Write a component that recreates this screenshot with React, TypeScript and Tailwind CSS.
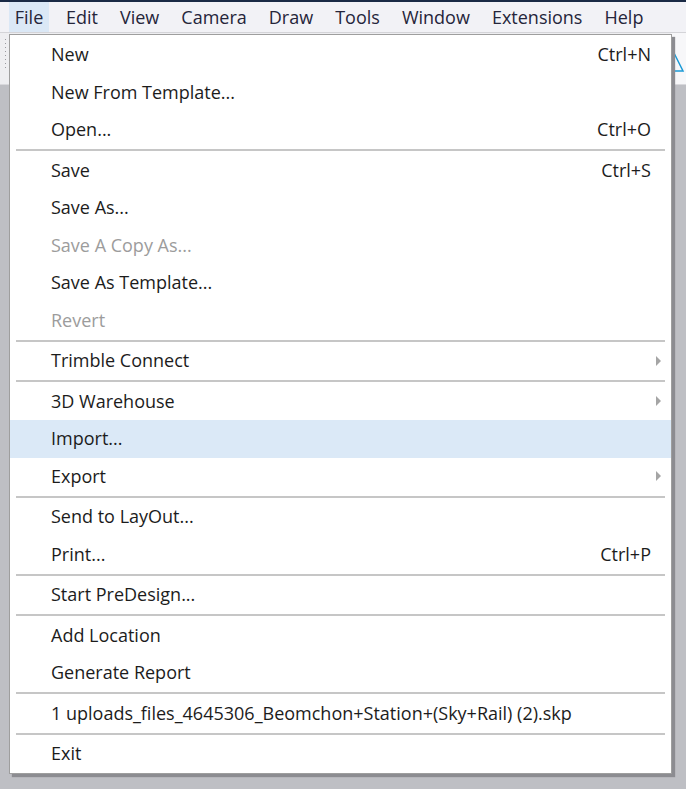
import React from 'react'

type Item = {
  label?: string
  shortcut?: string
  disabled?: boolean
  submenu?: boolean
  active?: boolean
  sep?: boolean
}

const items: Item[] = [
  { label: 'New', shortcut: 'Ctrl+N' },
  { label: 'New From Template...' },
  { label: 'Open...', shortcut: 'Ctrl+O' },
  { sep: true },
  { label: 'Save', shortcut: 'Ctrl+S' },
  { label: 'Save As...' },
  { label: 'Save A Copy As...', disabled: true },
  { label: 'Save As Template...' },
  { label: 'Revert', disabled: true },
  { sep: true },
  { label: 'Trimble Connect', submenu: true },
  { sep: true },
  { label: '3D Warehouse', submenu: true },
  { label: 'Import...', active: true },
  { label: 'Export', submenu: true },
  { sep: true },
  { label: 'Send to LayOut...' },
  { label: 'Print...', shortcut: 'Ctrl+P' },
  { sep: true },
  { label: 'Start PreDesign...' },
  { sep: true },
  { label: 'Add Location' },
  { label: 'Generate Report' },
  { sep: true },
  { label: '1 uploads_files_4645306_Beomchon+Station+(Sky+Rail) (2).skp' },
  { sep: true },
  { label: 'Exit' },
]

const menus = ['Edit', 'View', 'Camera', 'Draw', 'Tools', 'Window', 'Extensions', 'Help']

const Arrow = () => (
  <svg width="5" height="10" viewBox="0 0 5 10" className="absolute right-[10px]">
    <path d="M0 0 L5 5 L0 10 Z" fill="#a5a5a5" />
  </svg>
)

const MenuRow = ({ item }: { item: Item }) => {
  if (item.sep) {
    return (
      <div className="h-[3px] flex items-center px-[6px]">
        <div className="h-[2px] w-full bg-[#c6c6c6]" />
      </div>
    )
  }
  return (
    <div
      className={`relative h-[37.5px] flex items-center pl-[41px] pr-[20px] ${
        item.active ? 'bg-[#dbe9f7]' : ''
      } ${item.disabled ? 'text-[#9c9c9c]' : 'text-[#1c1c1c]'}`}
    >
      <span className="flex-1 whitespace-nowrap">{item.label}</span>
      {item.shortcut && <span>{item.shortcut}</span>}
      {item.submenu && <Arrow />}
    </div>
  )
}

const App = () => {
  return (
    <div
      className="relative w-[686px] h-[789px] overflow-hidden bg-[#bebfc4] text-[18px]"
      style={{ fontFamily: '"Open Sans", "Noto Sans", sans-serif' }}
    >
      <div className="h-[2px] bg-[#1a2a45]" />
      <div className="h-[31px] bg-[#f2f2f6] border-b border-[#d4d4d8] flex items-stretch pl-[9px] text-[#25253a]">
        <div className="w-[40px] bg-[#dbe8f6] flex items-center justify-center">File</div>
        {menus.map((m, i) => (
          <div key={m} className={`flex items-center ${i === 0 ? 'ml-[17px]' : 'ml-[22px]'}`}>
            {m}
          </div>
        ))}
      </div>
      <div className="h-[52px] bg-[#eeeef1] border-b border-[#d8d8dc] relative">
        <div className="absolute left-[5px] top-[6px] flex flex-col gap-[3px]">
          {Array.from({ length: 8 }).map((_, i) => (
            <div key={i} className="w-[1px] h-[1px] bg-[#9a9aa0]" />
          ))}
        </div>
        <div className="absolute right-0 top-0 w-[15px] h-full bg-[#f7f7f9]">
          <svg width="15" height="52" viewBox="0 0 15 52">
            <path d="M2 18 L12 38 L-2 38" fill="none" stroke="#1b9ad6" strokeWidth="1.5" />
          </svg>
        </div>
      </div>

      <div className="absolute left-[9px] top-[34px] w-[663px] bg-white border border-[#9e9e9e] pt-[1px] shadow-[3px_3px_1px_0_#8c8c91]">
        {items.map((it, i) => (
          <MenuRow key={i} item={it} />
        ))}
      </div>
    </div>
  )
}

export default App
